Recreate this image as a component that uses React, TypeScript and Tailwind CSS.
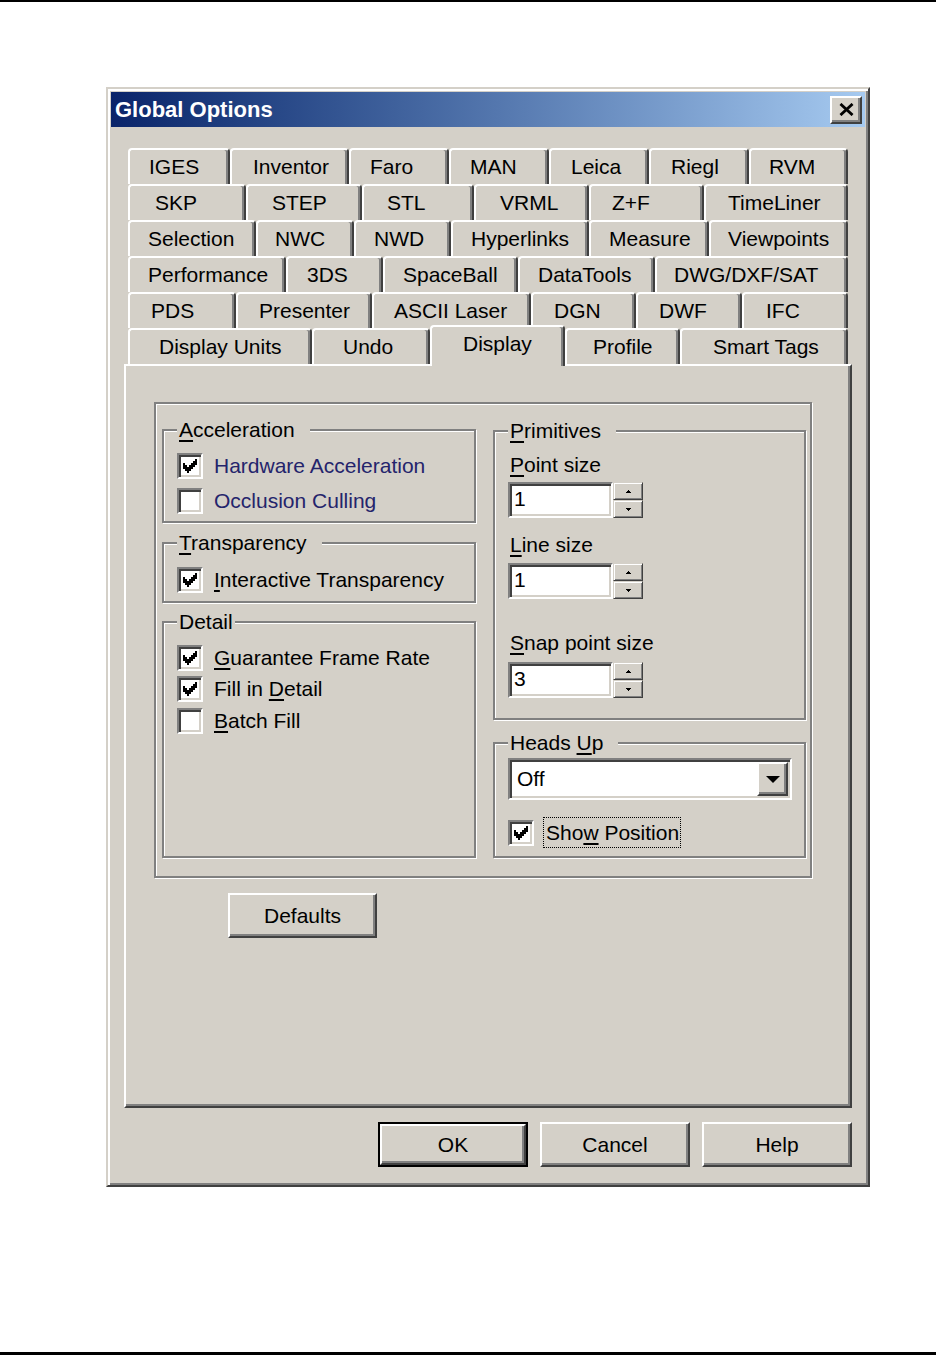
import React from 'react';

// Win2000-style 3D edges, scaled 2x
const raised =
  'border-2 border-t-white border-l-white border-r-[#404040] border-b-[#404040] shadow-[inset_-2px_-2px_0_#808080]';
const sunken =
  'border-2 border-t-[#808080] border-l-[#808080] border-r-white border-b-white shadow-[inset_2px_2px_0_#404040,inset_-2px_-2px_0_#d4d0c8]';
const smallRaised =
  'border border-t-[#d4d0c8] border-l-[#d4d0c8] border-r-[#404040] border-b-[#404040] shadow-[inset_1px_1px_0_#fff,inset_-1px_-1px_0_#808080]';

type Tab = [string, string, string];

const tabRows: Tab[][] = [
  [
    ['IGES', 'w-[102px]', 'pl-[19px]'],
    ['Inventor', 'w-[119px]', 'pl-[21px]'],
    ['Faro', 'w-[100px]', 'pl-[19px]'],
    ['MAN', 'w-[100px]', 'pl-[19px]'],
    ['Leica', 'w-[100px]', 'pl-[20px]'],
    ['Riegl', 'w-[100px]', 'pl-[20px]'],
    ['RVM', 'flex-1', 'pl-[18px]'],
  ],
  [
    ['SKP', 'w-[118px]', 'pl-[25px]'],
    ['STEP', 'w-[116px]', 'pl-[24px]'],
    ['STL', 'w-[112px]', 'pl-[23px]'],
    ['VRML', 'w-[115px]', 'pl-[24px]'],
    ['Z+F', 'w-[115px]', 'pl-[21px]'],
    ['TimeLiner', 'flex-1', 'pl-[22px]'],
  ],
  [
    ['Selection', 'w-[128px]', 'pl-[18px]'],
    ['NWC', 'w-[98px]', 'pl-[17px]'],
    ['NWD', 'w-[97px]', 'pl-[18px]'],
    ['Hyperlinks', 'w-[138px]', 'pl-[18px]'],
    ['Measure', 'w-[120px]', 'pl-[18px]'],
    ['Viewpoints', 'flex-1', 'pl-[17px]'],
  ],
  [
    ['Performance', 'w-[158px]', 'pl-[18px]'],
    ['3DS', 'w-[97px]', 'pl-[19px]'],
    ['SpaceBall', 'w-[135px]', 'pl-[18px]'],
    ['DataTools', 'w-[137px]', 'pl-[18px]'],
    ['DWG/DXF/SAT', 'flex-1', 'pl-[17px]'],
  ],
  [
    ['PDS', 'w-[108px]', 'pl-[21px]'],
    ['Presenter', 'w-[136px]', 'pl-[21px]'],
    ['ASCII Laser', 'w-[159px]', 'pl-[20px]'],
    ['DGN', 'w-[105px]', 'pl-[21px]'],
    ['DWF', 'w-[106px]', 'pl-[21px]'],
    ['IFC', 'flex-1', 'pl-[22px]'],
  ],
  [
    ['Display Units', 'w-[184px]', 'pl-[29px]'],
    ['Undo', 'w-[118px]', 'pl-[29px]'],
    ['Display', 'w-[135px]', 'pl-[31px]'],
    ['Profile', 'w-[115px]', 'pl-[26px]'],
    ['Smart Tags', 'flex-1', 'pl-[31px]'],
  ],
];

function TabItem({ tab, selected }: { tab: Tab; selected: boolean }) {
  const [label, w, pl] = tab;
  return (
    <div
      className={`${w} ${pl} relative flex shrink-0 items-center whitespace-nowrap rounded-t-[4px] border-t-2 border-l-2 border-r-2 border-t-white border-l-white border-r-[#404040] bg-[#d4d0c8] shadow-[inset_-2px_0_0_#808080] ${
        selected ? 'z-10 -mt-[3px] h-[41px] pb-[6px]' : 'h-[36px]'
      }`}
    >
      {label}
    </div>
  );
}

function CheckMark() {
  // 7x7 bitmap check, drawn as columns
  const cols: [number, number][] = [
    [0, 2],
    [1, 3],
    [2, 4],
    [3, 3],
    [4, 2],
    [5, 1],
    [6, 0],
  ];
  return (
    <svg viewBox="0 0 7 7" className="h-[14px] w-[14px]" shapeRendering="crispEdges">
      {cols.map(([x, y]) => (
        <rect key={x} x={x} y={y} width="1" height="3" fill="#000" />
      ))}
    </svg>
  );
}

function Check({ checked }: { checked?: boolean }) {
  return (
    <span className={`${sunken} flex h-[26px] w-[26px] shrink-0 items-center justify-center bg-white`}>
      {checked && <CheckMark />}
    </span>
  );
}

function CheckRow({
  checked,
  className = '',
  children,
}: {
  checked?: boolean;
  className?: string;
  children: React.ReactNode;
}) {
  return (
    <div className={`flex items-center gap-[11px] ${className}`}>
      <Check checked={checked} />
      <span className="whitespace-nowrap">{children}</span>
    </div>
  );
}

function Group({
  label,
  tight,
  className,
  children,
}: {
  label?: React.ReactNode;
  tight?: boolean;
  className: string;
  children?: React.ReactNode;
}) {
  return (
    <div className={`relative border-2 border-[#808080] shadow-[inset_1px_1px_0_#fff,1px_1px_0_#fff] ${className}`}>
      {label && (
        <span
          className={`absolute left-[13px] top-[-13px] whitespace-nowrap bg-[#d4d0c8] pl-[2px] leading-[24px] ${
            tight ? 'pr-[2px]' : 'pr-[15px]'
          }`}
        >
          {label}
        </span>
      )}
      {children}
    </div>
  );
}

function U({ children }: { children: React.ReactNode }) {
  return <span className="underline decoration-[1.5px] underline-offset-[3px]">{children}</span>;
}

function Spinner({ value, className = '' }: { value: string; className?: string }) {
  return (
    <div className={`flex h-[36px] ${className}`}>
      <div className={`${sunken} w-[105px] bg-white pl-[4px] leading-[30px]`}>{value}</div>
      <div className="flex w-[30px] flex-col">
        <div className={`${smallRaised} flex h-[18px] items-center justify-center`}>
          <svg viewBox="0 0 5 3" className="h-[3px] w-[5px]" shapeRendering="crispEdges">
            <polygon points="2.5,0 5,3 0,3" fill="#000" />
          </svg>
        </div>
        <div className={`${smallRaised} flex h-[18px] items-center justify-center`}>
          <svg viewBox="0 0 5 3" className="h-[3px] w-[5px]" shapeRendering="crispEdges">
            <polygon points="0,0 5,0 2.5,3" fill="#000" />
          </svg>
        </div>
      </div>
    </div>
  );
}

function Button({ children, className = '' }: { children: React.ReactNode; className?: string }) {
  return (
    <div className={`${raised} flex items-center justify-center ${className}`}>
      {children}
    </div>
  );
}

export default function App() {
  return (
    <div className="h-[1355px] w-[936px] overflow-hidden border-t-2 border-b-[3px] border-black bg-white font-['Liberation_Sans',Arial,sans-serif] text-[21px] leading-[24px] text-black">
      {/* Dialog window */}
      <div className="ml-[106px] mt-[85px] h-[1100px] w-[764px] border-2 border-t-[#d4d0c8] border-l-[#d4d0c8] border-r-[#404040] border-b-[#404040] bg-[#d4d0c8] shadow-[inset_2px_2px_0_#fff,inset_-2px_-2px_0_#808080]">
        {/* Title bar */}
        <div className="px-[3px] pt-[3px]">
          <div className="flex h-[35px] items-center justify-between bg-linear-to-r from-[#0a246a] to-[#a6caf0] pl-[4px] pr-[3px]">
            <span className="text-[22px] font-bold text-white">Global Options</span>
            <Button className="h-[28px] w-[32px] bg-[#d4d0c8]">
              <svg viewBox="0 0 16 14" className="h-[13px] w-[15px]">
                <path d="M1.5 1 L14.5 13 M14.5 1 L1.5 13" stroke="#000" strokeWidth="3" />
              </svg>
            </Button>
          </div>
        </div>

        <div className="px-[16px]">
          {/* Tab strip */}
          <div className="mx-[4px] mt-[21px]">
            {tabRows.map((row, ri) => (
              <div key={ri} className="flex h-[36px] items-start">
                {row.map((tab) => (
                  <TabItem key={tab[0]} tab={tab} selected={tab[0] === 'Display'} />
                ))}
              </div>
            ))}
          </div>

          {/* Tab panel */}
          <div className="h-[744px] border-2 border-t-white border-l-white border-r-[#404040] border-b-[#404040] pl-[28px] pt-[36px] shadow-[inset_-2px_-2px_0_#808080]">
            <Group className="flex h-[476px] w-[658px] gap-[17px] pl-[6px] pt-[25px]">
              {/* Left column */}
              <div className="flex w-[314px] flex-col">
                <Group
                  label={
                    <>
                      <U>A</U>cceleration
                    </>
                  }
                  className="h-[94px] pl-[13px] pt-[22px]"
                >
                  <div className="text-[#24246c]">
                    <CheckRow checked>Hardware Acceleration</CheckRow>
                    <CheckRow className="mt-[9px]">Occlusion Culling</CheckRow>
                  </div>
                </Group>

                <Group
                  label={
                    <>
                      <U>T</U>ransparency
                    </>
                  }
                  className="mt-[19px] h-[61px] pl-[13px] pt-[23px]"
                >
                  <CheckRow checked>
                    <U>I</U>nteractive Transparency
                  </CheckRow>
                </Group>

                <Group label="Detail" tight className="mt-[18px] h-[237px] pl-[13px] pt-[22px]">
                  <CheckRow checked>
                    <U>G</U>uarantee Frame Rate
                  </CheckRow>
                  <CheckRow checked className="mt-[5px]">
                    Fill in <U>D</U>etail
                  </CheckRow>
                  <CheckRow className="mt-[6px]">
                    <U>B</U>atch Fill
                  </CheckRow>
                </Group>
              </div>

              {/* Right column */}
              <div className="mt-[1px] flex w-[313px] flex-col">
                <Group
                  label={
                    <>
                      <U>P</U>rimitives
                    </>
                  }
                  className="h-[290px] pl-[13px] pt-[21px]"
                >
                  <div className="pl-[2px]">
                    <U>P</U>oint size
                  </div>
                  <Spinner value="1" className="mt-[5px]" />
                  <div className="mt-[15px] pl-[2px]">
                    <U>L</U>ine size
                  </div>
                  <Spinner value="1" className="mt-[6px]" />
                  <div className="mt-[32px] pl-[2px]">
                    <U>S</U>nap point size
                  </div>
                  <Spinner value="3" className="mt-[7px]" />
                </Group>

                <Group
                  label={
                    <>
                      Heads <U>U</U>p
                    </>
                  }
                  className="mt-[22px] h-[116px] pl-[13px] pt-[14px]"
                >
                  <div className={`${sunken} flex h-[42px] w-[284px] bg-white p-[2px]`}>
                    <span className="flex-1 self-center pl-[5px]">Off</span>
                    <div className={`${raised} flex h-full w-[31px] items-center justify-center bg-[#d4d0c8]`}>
                      <svg viewBox="0 0 14 7" className="h-[7px] w-[14px]">
                        <polygon points="0,0 14,0 7,7" fill="#000" />
                      </svg>
                    </div>
                  </div>
                  <div className="mt-[17px] flex items-center gap-[9px]">
                    <Check checked />
                    <span className="h-[31px] w-[138px] overflow-hidden whitespace-nowrap border border-dotted border-black pl-[2px] leading-[29px]">
                      Sho<U>w</U> Position
                    </span>
                  </div>
                </Group>
              </div>
            </Group>

            <Button className="ml-[74px] mt-[15px] h-[45px] w-[149px]">Defaults</Button>
          </div>

          {/* Dialog buttons */}
          <div className="mt-[14px] flex justify-end gap-[12px]">
            <div className="h-[45px] w-[150px] border-2 border-black">
              <Button className="h-full w-full">OK</Button>
            </div>
            <Button className="h-[45px] w-[150px]">Cancel</Button>
            <Button className="h-[45px] w-[150px]">Help</Button>
          </div>
        </div>
      </div>
    </div>
  );
}
